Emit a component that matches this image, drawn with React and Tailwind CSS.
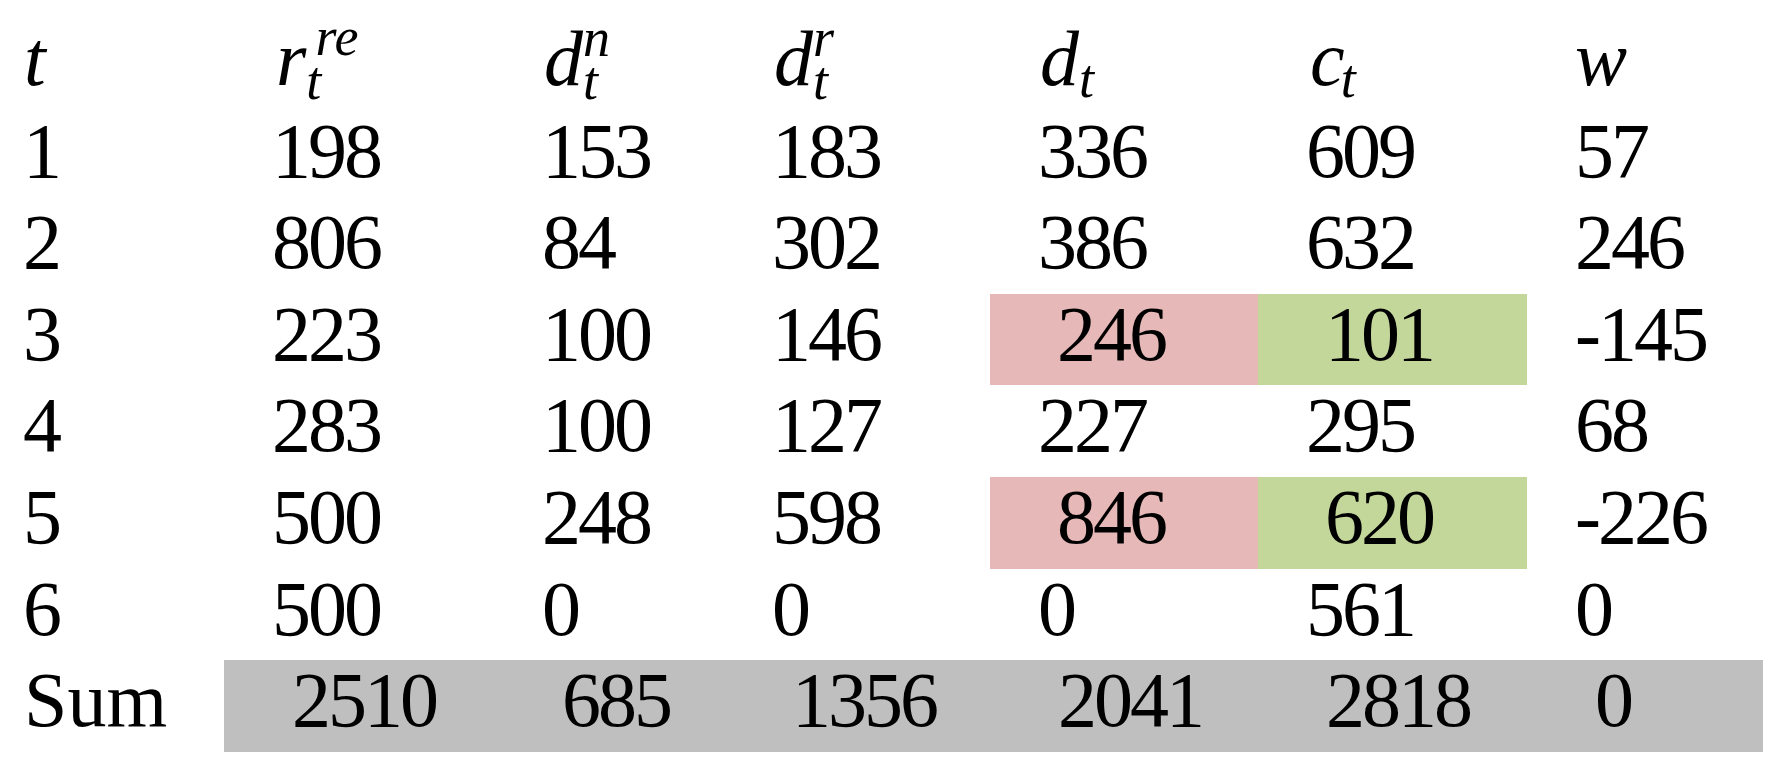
const rows = [
  { cells: ["1", "198", "153", "183", "336", "609", "57"] },
  { cells: ["2", "806", "84", "302", "386", "632", "246"] },
  { cells: ["3", "223", "100", "146", "246", "101", "-145"], marked: true },
  { cells: ["4", "283", "100", "127", "227", "295", "68"] },
  { cells: ["5", "500", "248", "598", "846", "620", "-226"], marked: true },
  { cells: ["6", "500", "0", "0", "0", "561", "0"] },
];

const sums = ["2510", "685", "1356", "2041", "2818", "0"];

const cell = "h-[91.6px] leading-[80px] whitespace-nowrap";
const script = "text-[54px] leading-[0]";

function Header() {
  return (
    <>
      <div className={`${cell} pl-[24px] italic`}>t</div>
      <div className={`${cell} pl-[52px] italic`}>
        r<span className={`${script} align-[-14px]`}>t</span>
        <span className={`${script} align-[30px] -ml-[6px]`}>re</span>
      </div>
      <div className={`${cell} pl-[50px] italic`}>
        d<span className={`${script} align-[-14px]`}>t</span>
        <span className={`${script} align-[29px] -ml-[15px]`}>n</span>
      </div>
      <div className={`${cell} pl-[50px] italic`}>
        d<span className={`${script} align-[-14px]`}>t</span>
        <span className={`${script} align-[29px] -ml-[15px]`}>r</span>
      </div>
      <div className={`${cell} pl-[50px] italic`}>
        d<span className={`${script} align-[-12px]`}>t</span>
      </div>
      <div className={`${cell} pl-[52px] italic`}>
        c<span className={`${script} align-[-12px] -ml-[4px]`}>t</span>
      </div>
      <div className={`${cell} pl-[48px] italic`}>w</div>
    </>
  );
}

export default function App() {
  return (
    <div className="min-h-screen bg-white pt-[19px] font-['Liberation_Serif',serif] text-[78px] text-black">
      <div className="grid w-[1763px] grid-cols-[224px_270px_230px_266px_268px_269px_236px]">
        <Header />
        {rows.map((row) =>
          row.cells.map((v, i) => {
            if (i === 0) {
              return (
                <div key={row.cells[0] + "-0"} className={`${cell} pl-[23px]`}>
                  {v}
                </div>
              );
            }
            if (row.marked && i === 4) {
              return (
                <div key={row.cells[0] + "-4"} className={`${cell} bg-[#e6b8b7] pl-[67px] tracking-[-3px]`}>
                  {v}
                </div>
              );
            }
            if (row.marked && i === 5) {
              return (
                <div key={row.cells[0] + "-5"} className={`${cell} bg-[#c4d79b] pl-[67px] tracking-[-3px]`}>
                  {v}
                </div>
              );
            }
            return (
              <div key={row.cells[0] + "-" + i} className={`${cell} pl-[48px] tracking-[-3px]`}>
                {v}
              </div>
            );
          })
        )}
        <div className={`${cell} pl-[24px]`}>Sum</div>
        {sums.map((v, i) => (
          <div key={"sum-" + i} className={`${cell} bg-[#bfbfbf] pl-[68px] tracking-[-3px]`}>
            {v}
          </div>
        ))}
      </div>
    </div>
  );
}
